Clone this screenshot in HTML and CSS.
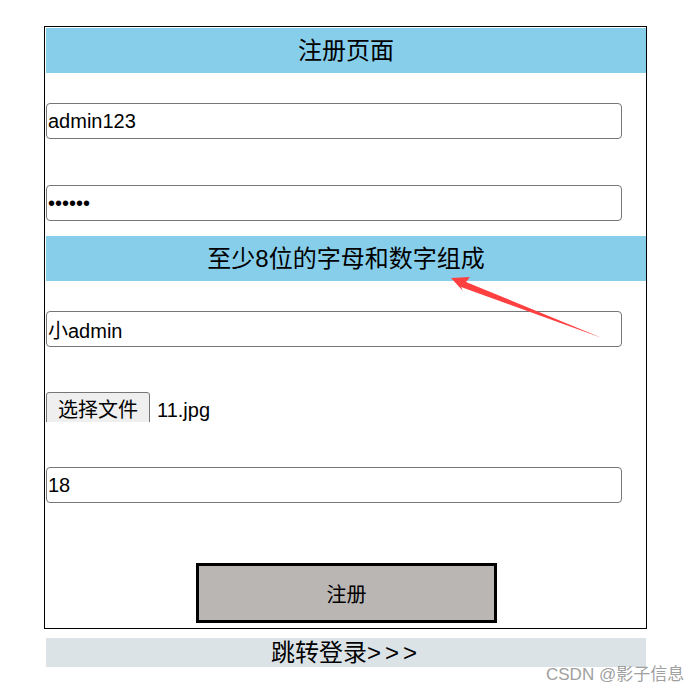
FILE: index.html
```html
<!DOCTYPE html>
<html lang="zh-CN">
<head>
<meta charset="utf-8">
<title>注册页面</title>
<link rel="stylesheet" href="styles.css">
</head>
<body>
<div class="page">
  <div class="box">
    <div class="header">注册页面</div>
    <input class="field f1" type="text" value="admin123">
    <input class="field f2" type="password" value="123456">
    <div class="header h2">至少8位的字母和数字组成</div>
    <input class="field f3" type="text" value="小admin">
    <div class="filerow">
      <span class="filebtn">选择文件</span>
      <span class="filename">11.jpg</span>
    </div>
    <input class="field f4" type="text" value="18">
    <button class="submit" type="button">注册</button>
  </div>
  <div class="loginlink">跳转登录<span class="gt">&gt;&gt;&gt;</span></div>
</div>
<svg class="arrow" width="699" height="692" viewBox="0 0 699 692">
  <polygon points="451,278 470,277 466,282 602,338 461,287 463,291" fill="#ff4040"/>
</svg>
<div class="watermark">CSDN @影子信息</div>
</body>
</html>
```
FILE: styles.css
```css
html, body {
  margin: 0;
  padding: 0;
  background: #fff;
}
body {
  font-family: "Liberation Sans", "Noto Sans CJK SC", sans-serif;
  color: #000;
}
.page {
  padding: 26px 0 0 44px;
}
.box {
  width: 600px;
  border: 1px solid #000;
  padding: 1px 0 5px 1px;
}
.header {
  height: 45px;
  line-height: 45px;
  background: #87ceeb;
  text-align: center;
  font-size: 24px;
}
.field {
  display: block;
  box-sizing: border-box;
  width: 576px;
  height: 36px;
  margin: 0;
  padding: 0 1px;
  border: 1px solid #767676;
  border-radius: 4px;
  font-family: "Liberation Sans", "Noto Sans CJK SC", sans-serif;
  font-size: 20px;
  color: #000;
  background: #fff;
  outline: none;
}
.f1 { margin-top: 30px; }
.f2 { margin-top: 46px; }
.h2 { margin-top: 15px; }
.f3 { margin-top: 30px; }
.filerow {
  margin-top: 45px;
  height: 30px;
  overflow: hidden;
  display: flex;
  align-items: flex-start;
}
.filebtn {
  box-sizing: border-box;
  width: 104px;
  height: 36px;
  line-height: 34px;
  border: 1px solid #767676;
  border-radius: 3px;
  background: #efefef;
  text-align: center;
  font-size: 20px;
}
.filename {
  margin-left: 7px;
  line-height: 36px;
  font-size: 20px;
}
.f4 { margin-top: 45px; }
.submit {
  display: block;
  box-sizing: border-box;
  width: 301px;
  height: 60px;
  margin: 60px 0 0 150px;
  border: 3px solid #000;
  background: #bab6b4;
  font-family: "Liberation Sans", "Noto Sans CJK SC", sans-serif;
  font-size: 20px;
  color: #000;
  padding: 0;
}
.loginlink {
  margin: 9px 0 0 2px;
  width: 600px;
  height: 29px;
  line-height: 29px;
  background: #dce3e7;
  text-align: center;
  font-size: 24px;
}
.gt {
  letter-spacing: 4px;
}
.arrow {
  position: absolute;
  left: 0;
  top: 0;
  pointer-events: none;
}
.watermark {
  position: absolute;
  left: 546px;
  top: 660px;
  font-size: 17px;
  color: #a0a0a0;
  font-family: "Liberation Sans", "Noto Sans CJK SC", sans-serif;
}
```
